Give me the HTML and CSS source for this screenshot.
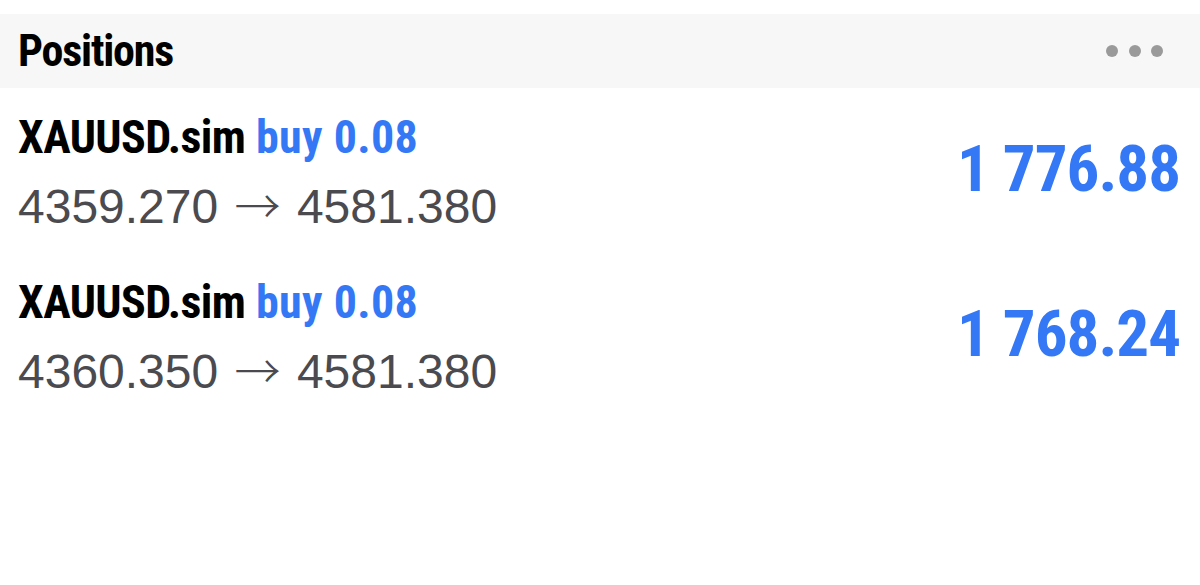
FILE: index.html
```html
<!DOCTYPE html>
<html>
<head>
<meta charset="utf-8">
<title>Positions</title>
<link rel="stylesheet" href="styles.css">
</head>
<body>
<div class="panel">
  <header class="panel-head">
    <h1 class="panel-title">Positions</h1>
    <div class="more" aria-label="More">
      <span class="dot"></span><span class="dot"></span><span class="dot"></span>
    </div>
  </header>
  <ul class="positions">
    <li class="position">
      <div class="pos-info">
        <div class="pos-title"><span class="symbol">XAUUSD.sim</span> <span class="side">buy 0.08</span></div>
        <div class="pos-prices">4359.270 <span class="arrow">→</span> 4581.380</div>
      </div>
      <div class="pos-profit">1 776.88</div>
    </li>
    <li class="position">
      <div class="pos-info">
        <div class="pos-title"><span class="symbol">XAUUSD.sim</span> <span class="side">buy 0.08</span></div>
        <div class="pos-prices">4360.350 <span class="arrow">→</span> 4581.380</div>
      </div>
      <div class="pos-profit">1 768.24</div>
    </li>
  </ul>
</div>
</body>
</html>
```
FILE: styles.css
```css
html, body {
  margin: 0;
  padding: 0;
  background: #ffffff;
}

.panel {
  padding-top: 14px;
}

.panel-head {
  display: flex;
  align-items: center;
  justify-content: space-between;
  height: 74px;
  padding: 0 37px 0 18px;
  background: #f7f7f7;
}

.panel-title {
  margin: 0;
  font-family: Roboto, "Open Sans", sans-serif;
  font-stretch: 75%;
  font-weight: 700;
  font-size: 44px;
  letter-spacing: -1.2px;
  line-height: 74px;
  color: #000;
}

.more {
  display: flex;
  gap: 10.5px;
}

.dot {
  width: 12px;
  height: 12px;
  border-radius: 50%;
  background: #9a9a9a;
}

.positions {
  list-style: none;
  margin: 0;
  padding: 0;
}

.position {
  display: flex;
  align-items: flex-start;
  justify-content: space-between;
  padding: 19px 20px 6px 18px;
}

.pos-title {
  font-family: Roboto, "Open Sans", sans-serif;
  font-stretch: 75%;
  font-weight: 700;
  font-size: 46px;
  line-height: 60px;
  white-space: nowrap;
}

.symbol {
  color: #000;
  letter-spacing: -0.6px;
}

.side {
  color: #3478f6;
  letter-spacing: 0.3px;
}

.pos-prices {
  font-family: "Liberation Sans", Arial, sans-serif;
  font-size: 48px;
  line-height: 80px;
  color: #4a4a4f;
  white-space: nowrap;
}

.arrow {
  display: inline-block;
  margin: 0 3px;
  font-family: "Noto Sans CJK SC", "DejaVu Sans", sans-serif;
  font-weight: 300;
  font-size: 46px;
  line-height: 1;
  vertical-align: baseline;
}

.pos-profit {
  margin-top: 29px;
  font-family: Roboto, "Open Sans", sans-serif;
  font-stretch: 75%;
  font-weight: 700;
  font-size: 65px;
  letter-spacing: -1px;
  line-height: 66px;
  color: #3478f6;
  white-space: nowrap;
}
```
